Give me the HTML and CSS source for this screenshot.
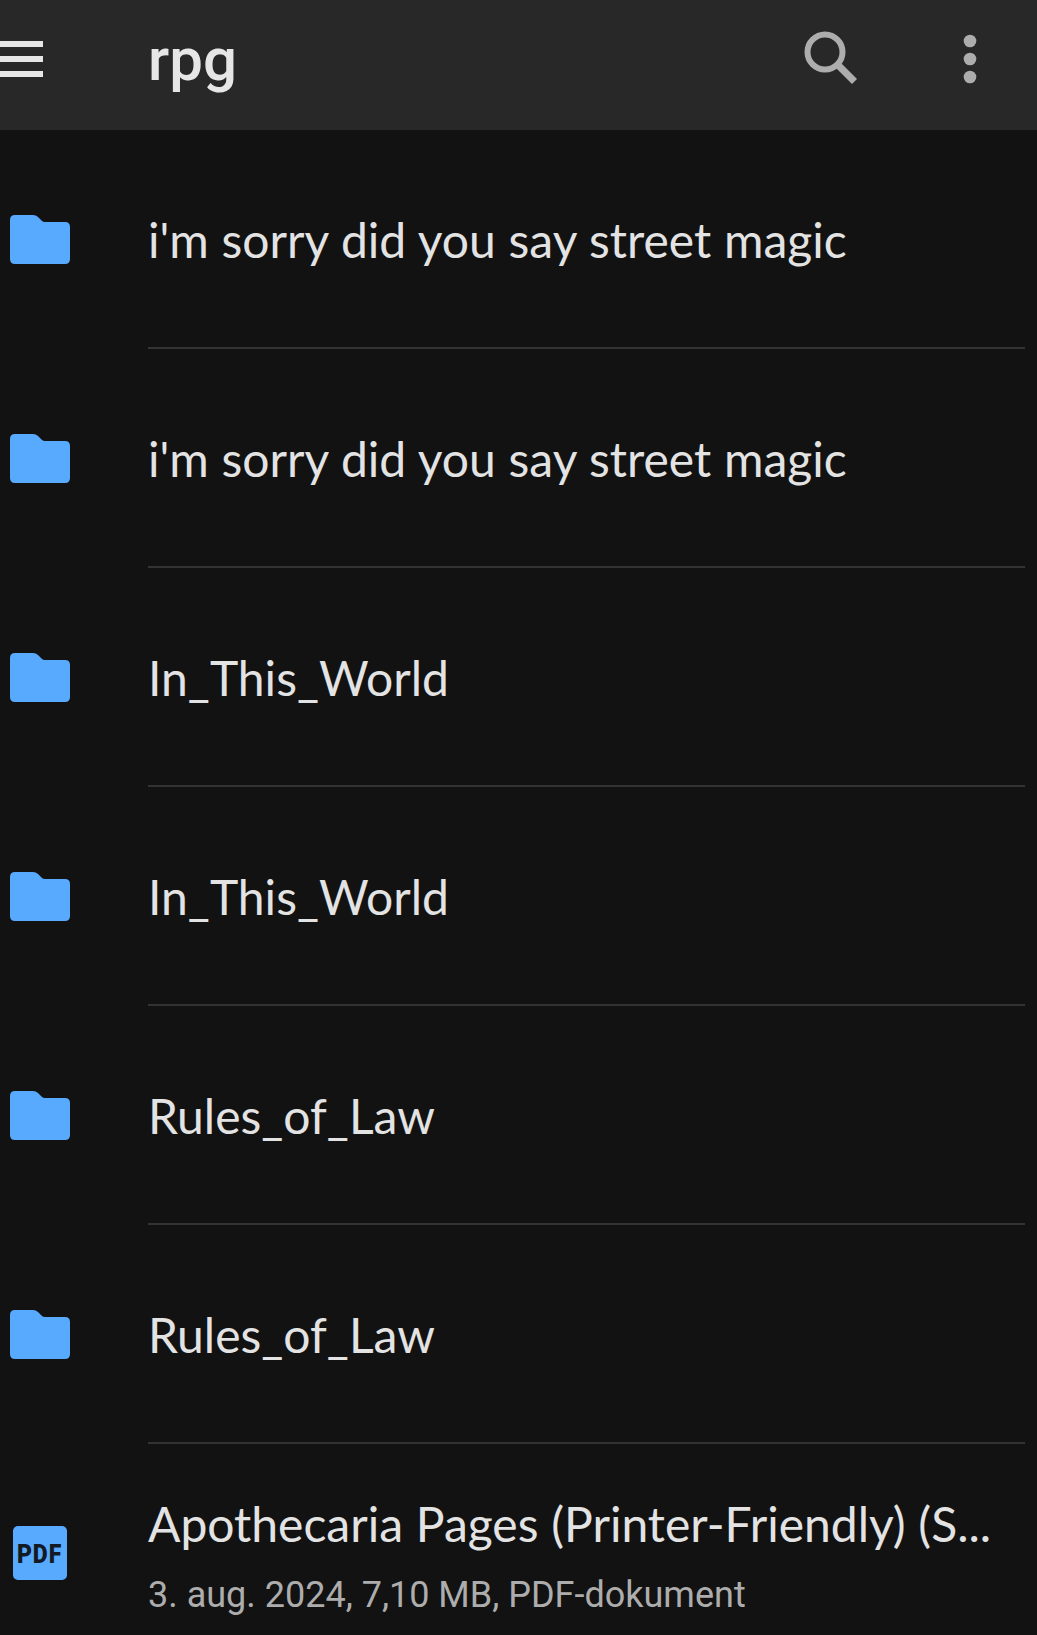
FILE: index.html
```html
<!DOCTYPE html>
<html lang="da">
<head>
<meta charset="utf-8">
<title>rpg</title>
<link rel="stylesheet" href="styles.css">
</head>
<body>
<header class="appbar">
  <div class="nav-slot">
    <svg class="menu-icon" width="44" height="38" viewBox="0 0 44 38"><path d="M0 0h43v6H0zM0 15h43v6H0zM0 30h43v6H0z" fill="#e6e6e6"/></svg>
  </div>
  <h1 class="appbar-title">rpg</h1>
  <svg class="search-icon" width="56" height="56" viewBox="0 0 56 56"><circle cx="23" cy="23" r="17.5" fill="none" stroke="#adadad" stroke-width="6"/><path d="M36 36l16.500 16.500" stroke="#adadad" stroke-width="7" fill="none"/></svg>
  <svg class="more-icon" width="14" height="50" viewBox="0 0 14 50"><circle cx="7" cy="7" r="6.300" fill="#adadad"/><circle cx="7" cy="25" r="6.300" fill="#adadad"/><circle cx="7" cy="43" r="6.300" fill="#adadad"/></svg>
</header>
<main class="list">
  <div class="row"><div class="icon-slot"><svg class="folder" width="60" height="49" viewBox="0 0 60 49"><path d="M5 0h18q3 0 5 2l4 4q1 1 3 1h20q5 0 5 5v32q0 5-5 5H5q-5 0-5-5V5q0-5 5-5z" fill="#58aaff"/></svg></div><div class="row-body"><div class="name">i'm sorry did you say street magic</div></div></div>
  <div class="row"><div class="icon-slot"><svg class="folder" width="60" height="49" viewBox="0 0 60 49"><path d="M5 0h18q3 0 5 2l4 4q1 1 3 1h20q5 0 5 5v32q0 5-5 5H5q-5 0-5-5V5q0-5 5-5z" fill="#58aaff"/></svg></div><div class="row-body"><div class="name">i'm sorry did you say street magic</div></div></div>
  <div class="row"><div class="icon-slot"><svg class="folder" width="60" height="49" viewBox="0 0 60 49"><path d="M5 0h18q3 0 5 2l4 4q1 1 3 1h20q5 0 5 5v32q0 5-5 5H5q-5 0-5-5V5q0-5 5-5z" fill="#58aaff"/></svg></div><div class="row-body"><div class="name">In_This_World</div></div></div>
  <div class="row"><div class="icon-slot"><svg class="folder" width="60" height="49" viewBox="0 0 60 49"><path d="M5 0h18q3 0 5 2l4 4q1 1 3 1h20q5 0 5 5v32q0 5-5 5H5q-5 0-5-5V5q0-5 5-5z" fill="#58aaff"/></svg></div><div class="row-body"><div class="name">In_This_World</div></div></div>
  <div class="row"><div class="icon-slot"><svg class="folder" width="60" height="49" viewBox="0 0 60 49"><path d="M5 0h18q3 0 5 2l4 4q1 1 3 1h20q5 0 5 5v32q0 5-5 5H5q-5 0-5-5V5q0-5 5-5z" fill="#58aaff"/></svg></div><div class="row-body"><div class="name">Rules_of_Law</div></div></div>
  <div class="row"><div class="icon-slot"><svg class="folder" width="60" height="49" viewBox="0 0 60 49"><path d="M5 0h18q3 0 5 2l4 4q1 1 3 1h20q5 0 5 5v32q0 5-5 5H5q-5 0-5-5V5q0-5 5-5z" fill="#58aaff"/></svg></div><div class="row-body"><div class="name">Rules_of_Law</div></div></div>
  <div class="row file-row">
    <div class="icon-slot"><div class="pdf-icon"><span class="pdf-label">PDF</span></div></div>
    <div class="row-body">
      <div class="name name-file">Apothecaria Pages (Printer-Friendly) (S...</div>
      <div class="meta">3. aug. 2024, 7,10 MB, PDF-dokument</div>
    </div>
  </div>
</main>
</body>
</html>
```
FILE: styles.css
```css
* { box-sizing: border-box; }
html, body { margin: 0; padding: 0; }
body {
  width: 1037px;
  height: 1635px;
  overflow: hidden;
  background: #121212;
  font-family: "Lato", sans-serif;
}
.appbar {
  display: flex;
  align-items: center;
  height: 130px;
  padding-bottom: 12px;
  background: #282828;
}
.nav-slot { width: 148px; flex: none; display: flex; padding-top: 2px; }
.menu-icon { display: block; }
.appbar-title {
  margin: 2px 0 0;
  flex: 1;
  font: 500 60px/1 "Roboto", sans-serif;
  color: #e6e6e6;
}
.search-icon { flex: none; margin-right: 105px; margin-bottom: 4px; }
.more-icon { flex: none; margin-right: 60px; }
.list { display: flex; flex-direction: column; }
.row { display: flex; height: 219px; }
.icon-slot {
  width: 148px;
  flex: none;
  display: flex;
  align-items: center;
  padding-left: 10px;
}
.folder { display: block; margin-bottom: 1px; }
.row-body {
  flex: none;
  width: 877px;
  border-bottom: 2px solid #333333;
  display: flex;
  flex-direction: column;
  justify-content: center;
  padding-top: 2px;
}
.name {
  font-size: 48px;
  line-height: 60px;
  word-spacing: 0.5px;
  color: #e3e3e3;
  white-space: nowrap;
}
.file-row { height: 191px; }
.file-row .icon-slot { padding-left: 13px; align-items: flex-start; padding-top: 82px; }
.file-row .row-body { border-bottom: 0; justify-content: flex-start; padding-top: 50px; }
.meta {
  font: 400 36px/44px "Roboto", sans-serif;
  color: #adadad;
  margin-top: 19px;
  white-space: nowrap;
}
.pdf-icon {
  display: flex;
  align-items: center;
  justify-content: center;
  width: 54px;
  height: 54px;
  padding-top: 2px;
  border-radius: 5px;
  background: #58aaff;
  color: #121a26;
  font: 900 25px/1 "Roboto", sans-serif;
}
.pdf-label { display: block; transform: scaleX(0.92); letter-spacing: 1px; }
```
